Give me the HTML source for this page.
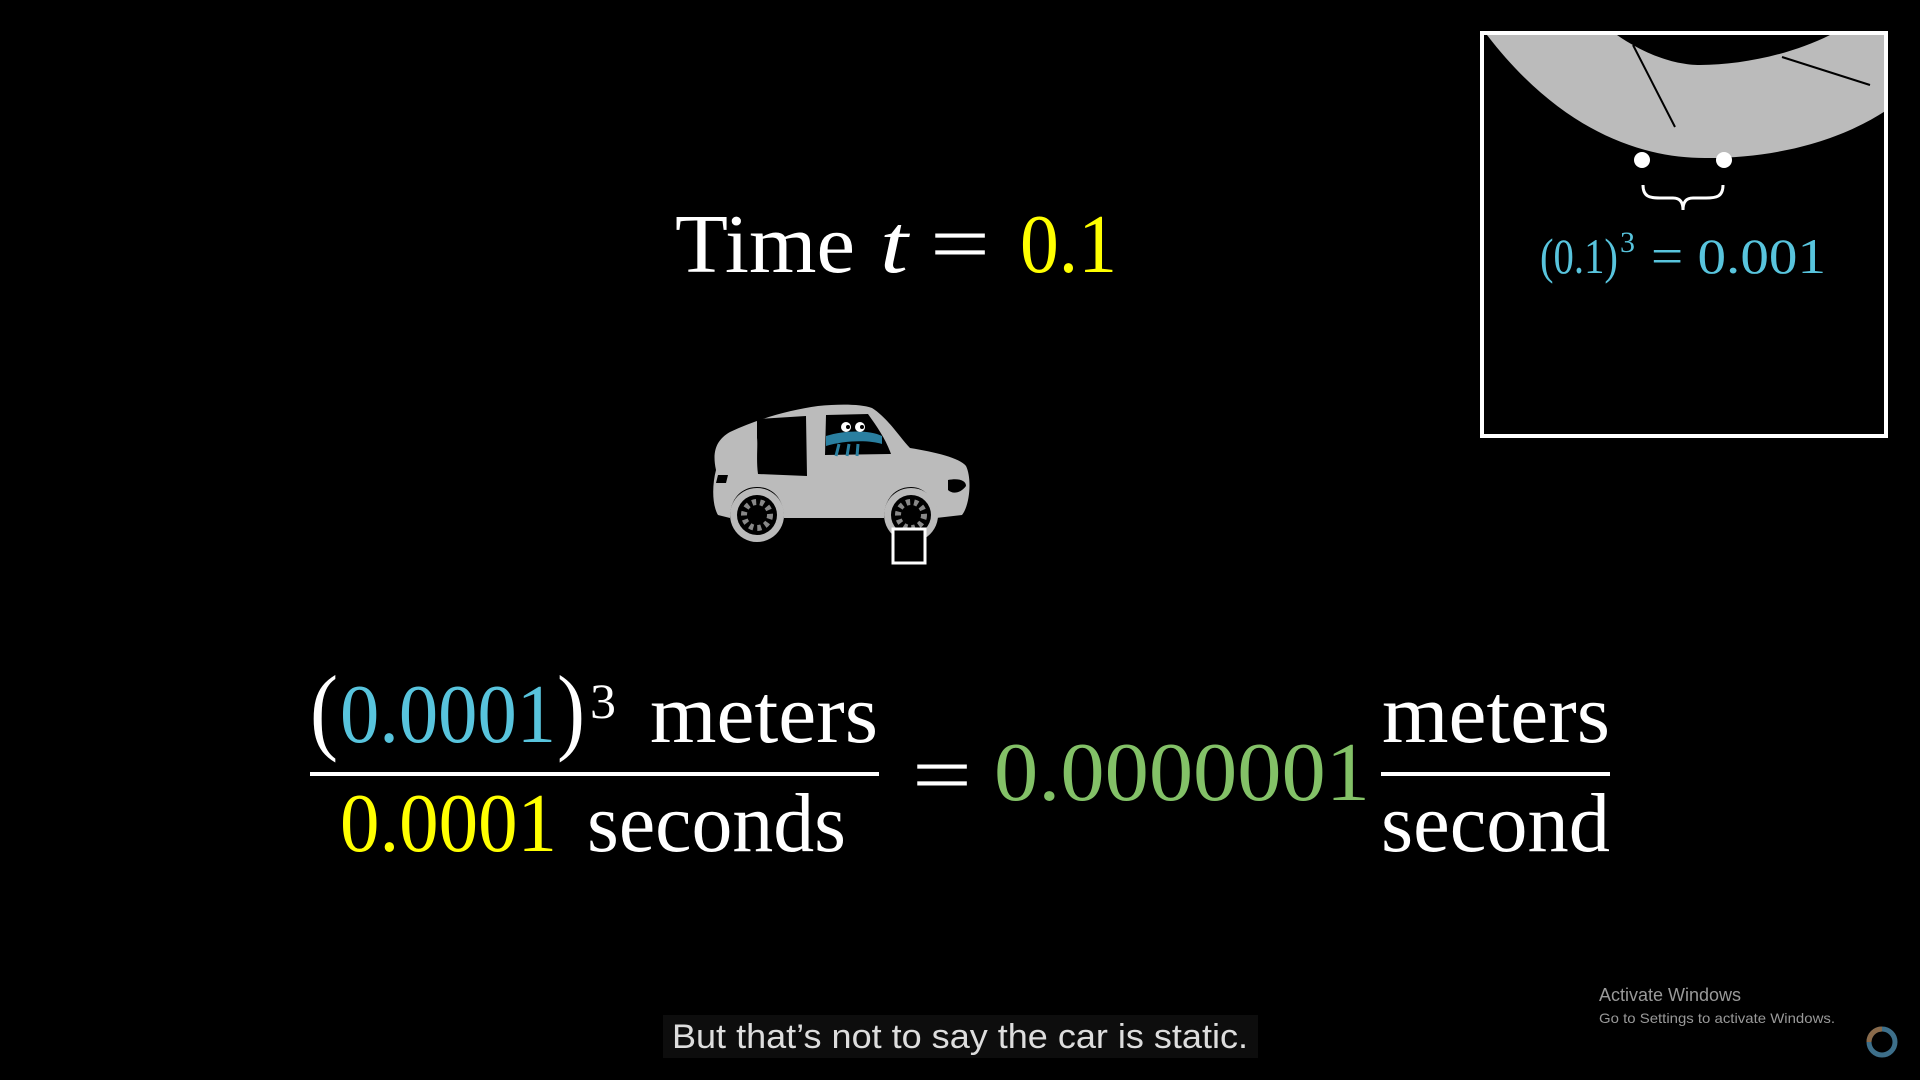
<!DOCTYPE html>
<html><head><meta charset="utf-8"><style>
html,body{margin:0;padding:0;background:#000;width:1920px;height:1080px;overflow:hidden}
svg{display:block}
.m{font-family:"Liberation Serif",serif}
</style></head><body>
<svg width="1920" height="1080" viewBox="0 0 1920 1080" xmlns="http://www.w3.org/2000/svg">
<rect width="1920" height="1080" fill="#000"/>
<!-- Title -->
<g class="m" font-size="84" fill="#fff">
<text x="675" y="272" textLength="180" lengthAdjust="spacingAndGlyphs">Time</text>
<text x="880" y="272" font-style="italic" textLength="28" lengthAdjust="spacingAndGlyphs">t</text>
<text x="930" y="272" textLength="60" lengthAdjust="spacingAndGlyphs">=</text>
<text x="1020" y="272" fill="#FFFF00" textLength="97" lengthAdjust="spacingAndGlyphs">0.1</text>
</g>
<!-- Car -->
<g>
<path d="M716 470 C712 452 716 440 730 432 C760 418 790 410 818 406 C840 404 860 404 872 408 C888 418 900 438 910 448 C935 452 960 458 966 466 C972 478 970 505 962 515 L936 518 C936 498 924 487 911 487 C896 487 884 498 884 518 L784 518 C784 498 772 487 757 487 C742 487 730 498 730 518 L718 515 C712 505 712 485 716 470Z" fill="#bbb"/>
<path d="M757 488 A27 27 0 1 0 757.1 488Z" fill="#bbb"/>
<path d="M911 488 A27 27 0 1 0 911.1 488Z" fill="#bbb"/>
<circle cx="757" cy="515" r="20" fill="#000"/>
<circle cx="911" cy="515" r="20" fill="#000"/>
<circle cx="757" cy="515" r="13" fill="none" stroke="#888" stroke-width="6" stroke-dasharray="4 4"/>
<circle cx="911" cy="515" r="13" fill="none" stroke="#888" stroke-width="6" stroke-dasharray="4 4"/>
<path d="M757 419 L806 416 L807 476 L758 474 C756 460 758 445 757 438 Z" fill="#000"/>
<path d="M826 415 L868 414 C878 428 886 440 891 454 L825 455 Z" fill="#000"/>
<path d="M826 436 C845 430 870 430 882 436 L882 444 C870 440 845 440 826 446Z" fill="#2a7fa0"/>
<path d="M839 444 L836 456 M849 444 L847 456 M858 444 L857 456" stroke="#2a7fa0" stroke-width="3"/>
<circle cx="846" cy="427" r="5" fill="#fff"/><circle cx="860" cy="427" r="5" fill="#fff"/>
<circle cx="848" cy="427" r="2" fill="#000"/><circle cx="862" cy="427" r="2" fill="#000"/>
<path d="M718 475 L728 475 L726 483 L716 483Z" fill="#000"/>
<path d="M948 480 C958 478 966 480 966 486 C960 494 952 494 948 490Z" fill="#000"/>
<rect x="893" y="529" width="32" height="34" fill="#000" stroke="#fff" stroke-width="3"/>
</g>
<!-- Fraction -->
<g class="m" font-size="84" fill="#fff">
<text x="310" y="742" textLength="28" lengthAdjust="spacingAndGlyphs" font-size="96">(</text>
<text x="340" y="742" fill="#58C4DD" textLength="216" lengthAdjust="spacingAndGlyphs">0.0001</text>
<text x="557" y="742" textLength="28" lengthAdjust="spacingAndGlyphs" font-size="96">)</text>
<text x="590" y="718" font-size="50" textLength="26" lengthAdjust="spacingAndGlyphs">3</text>
<text x="650" y="742" textLength="228" lengthAdjust="spacingAndGlyphs">meters</text>
<rect x="310" y="772" width="569" height="4"/>
<text x="340" y="851" fill="#FFFF00" textLength="217" lengthAdjust="spacingAndGlyphs">0.0001</text>
<text x="587" y="851" textLength="259" lengthAdjust="spacingAndGlyphs">seconds</text>
<text x="912" y="803" textLength="60" lengthAdjust="spacingAndGlyphs">=</text>
<text x="994" y="800" fill="#83C167" textLength="376" lengthAdjust="spacingAndGlyphs">0.0000001</text>
<text x="1382" y="742" textLength="228" lengthAdjust="spacingAndGlyphs">meters</text>
<rect x="1381" y="772" width="229" height="4"/>
<text x="1381" y="851" textLength="229" lengthAdjust="spacingAndGlyphs">second</text>
</g>
<!-- Inset -->
<g>
<clipPath id="c"><rect x="1482" y="34" width="404" height="401"/></clipPath>
<g clip-path="url(#c)">
<path d="M1480 25 L1487 35 C1560 130 1640 158 1705 158 C1790 158 1850 135 1890 108 L1890 25 Z" fill="#bbb"/>
<path d="M1610 25 L1617 35 C1650 58 1680 65 1700 65 C1740 65 1790 55 1830 35 L1835 25 Z" fill="#000"/>
<path d="M1633 45 L1675 127 M1782 57 L1870 85" stroke="#000" stroke-width="2"/>
</g>
<rect x="1482" y="33" width="404" height="403" fill="none" stroke="#fff" stroke-width="4"/>
<circle cx="1642" cy="160" r="8" fill="#fff"/>
<circle cx="1724" cy="160" r="8" fill="#fff"/>
<path d="M1643 185 C1643 197 1650 198 1660 198 L1673 198 C1680 198 1683 202 1683 210 C1683 202 1686 198 1693 198 L1706 198 C1716 198 1723 197 1723 185" fill="none" stroke="#fff" stroke-width="3"/>
<g class="m" fill="#58C4DD" font-size="50">
<text x="1540" y="273" textLength="78" lengthAdjust="spacingAndGlyphs">(0.1)</text>
<text x="1620" y="252" font-size="30">3</text>
<text x="1651" y="273" textLength="175" lengthAdjust="spacingAndGlyphs">= 0.001</text>
</g>
</g>
<!-- Caption -->
<rect x="663" y="1015" width="595" height="43" fill="#0d0d0d"/>
<text x="672" y="1048" font-family="Liberation Sans,sans-serif" font-size="34" fill="#ddd" textLength="576" lengthAdjust="spacingAndGlyphs">But that’s not to say the car is static.</text>
<!-- Watermark -->
<text x="1599" y="1001" font-family="Liberation Sans,sans-serif" font-size="18" fill="#999">Activate Windows</text>
<text x="1599" y="1023" font-family="Liberation Sans,sans-serif" font-size="14" fill="#999" textLength="236" lengthAdjust="spacingAndGlyphs">Go to Settings to activate Windows.</text>
<circle cx="1882" cy="1042" r="13" fill="none" stroke="#3d6f8a" stroke-width="5"/>
<path d="M1882 1029 A13 13 0 0 0 1869 1042" fill="none" stroke="#8a6a4a" stroke-width="5"/>
</svg>
</body></html>
